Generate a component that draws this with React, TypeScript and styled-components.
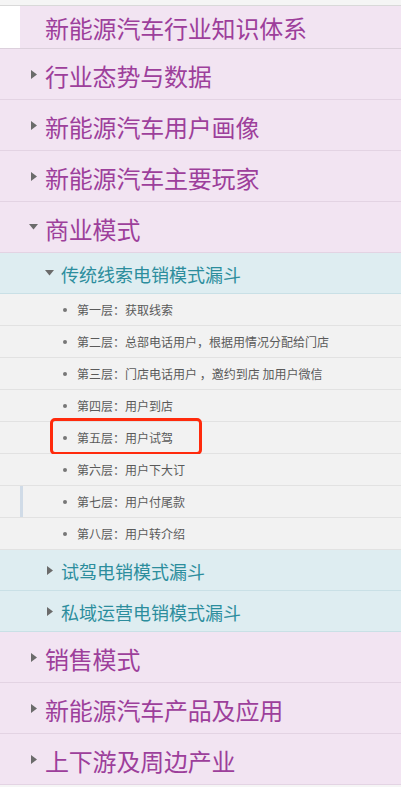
import { createGlobalStyle } from 'styled-components'
import styled from 'styled-components'
import type { FC } from 'react'

const GlobalStyle = createGlobalStyle`
  html, body {
    margin: 0;
    padding: 0;
    background: #f5f5f5;
  }
  body {
    font-family: "Noto Sans CJK SC", "Noto Sans", sans-serif;
  }
`

type Leaf = { label: string; marked?: boolean; highlighted?: boolean }

const topics = ['行业态势与数据', '新能源汽车用户画像', '新能源汽车主要玩家']
const bottomTopics = ['销售模式', '新能源汽车产品及应用', '上下游及周边产业']

const leaves: Leaf[] = [
  { label: '第一层：获取线索' },
  { label: '第二层：总部电话用户，根据用情况分配给门店' },
  { label: '第三层：门店电话用户 ，邀约到店 加用户微信' },
  { label: '第四层：用户到店' },
  { label: '第五层：用户试驾', highlighted: true },
  { label: '第六层：用户下大订' },
  { label: '第七层：用户付尾款', marked: true },
  { label: '第八层：用户转介绍' }
]

const Arrow: FC<{ open?: boolean }> = ({ open }) => (
  <ArrowBox>
    {open ? (
      <svg width="9" height="6" viewBox="0 0 9 6">
        <path d="M0 0 L9 0 L4.5 5.5 Z" fill="#6b6b6b" />
      </svg>
    ) : (
      <svg width="6" height="9" viewBox="0 0 6 9">
        <path d="M0 0 L6 4.5 L0 9 Z" fill="#6b6b6b" />
      </svg>
    )}
  </ArrowBox>
)

const App: FC = () => {
  return (
    <>
      <GlobalStyle />
      <Page>
        <TopStrip />
        <Tree>
          <HeaderRow>
            <HeaderGap />
            <HeaderTitle>新能源汽车行业知识体系</HeaderTitle>
          </HeaderRow>

          {topics.map((t) => (
            <TopicRow key={t}>
              <Arrow />
              <TopicText>{t}</TopicText>
            </TopicRow>
          ))}

          <TopicRow>
            <Arrow open />
            <TopicText>商业模式</TopicText>
          </TopicRow>

          <SubRow>
            <Arrow open />
            <SubText>传统线索电销模式漏斗</SubText>
          </SubRow>

          {leaves.map((l) => (
            <LeafRow key={l.label} $marked={l.marked}>
              <Bullet />
              <LeafText>{l.label}</LeafText>
              {l.highlighted && <Highlight />}
            </LeafRow>
          ))}

          <SubRow>
            <Arrow />
            <SubText>试驾电销模式漏斗</SubText>
          </SubRow>
          <SubRow>
            <Arrow />
            <SubText>私域运营电销模式漏斗</SubText>
          </SubRow>

          {bottomTopics.map((t) => (
            <TopicRow key={t}>
              <Arrow />
              <TopicText>{t}</TopicText>
            </TopicRow>
          ))}
        </Tree>
      </Page>
    </>
  )
}

// Styled Components
const Page = styled.div`
  width: 401px;
  min-height: 787px;
  background: #f5f5f5;
`

const TopStrip = styled.div`
  height: 5px;
  border-bottom: 1px solid #d9d9d9;
`

const Tree = styled.div`
  display: flex;
  flex-direction: column;
`

const HeaderRow = styled.div`
  display: flex;
  height: 42px;
  border-bottom: 1px solid #dcd0dc;
  background: #f2e4f2;
`

const HeaderGap = styled.div`
  width: 20px;
  background: #ffffff;
`

const HeaderTitle = styled.div`
  display: flex;
  align-items: center;
  padding-left: 25px;
  font-size: 24px;
  color: #9d3f9b;
  letter-spacing: -0.2px;
`

const TopicRow = styled.div`
  display: flex;
  align-items: center;
  height: 50px;
  padding-left: 29px;
  background: #f2e4f2;
  border-bottom: 1px solid #e3d3e3;
`

const ArrowBox = styled.span`
  display: flex;
  align-items: center;
  justify-content: center;
  width: 9px;
  margin-right: 7px;
`

const TopicText = styled.span`
  font-size: 24px;
  color: #9d3f9b;
  letter-spacing: -0.2px;
  padding-top: 2px;
`

const SubRow = styled.div`
  display: flex;
  align-items: center;
  height: 40px;
  padding-left: 45px;
  background: #deedf1;
  border-bottom: 1px solid #c9e0e6;
`

const SubText = styled.span`
  font-size: 18px;
  color: #2c8d9d;
  padding-top: 1px;
`

const LeafRow = styled.div<{ $marked?: boolean }>`
  position: relative;
  display: flex;
  align-items: center;
  height: 31px;
  padding-left: 63px;
  background: #f2f2f2;
  border-bottom: 1px solid #e2e2e2;

  &::before {
    content: '';
    display: ${(p) => (p.$marked ? 'block' : 'none')};
    position: absolute;
    left: 20px;
    top: 0;
    bottom: 0;
    width: 3px;
    background: #d0dbe7;
  }
`

const Bullet = styled.span`
  width: 4px;
  height: 4px;
  border-radius: 50%;
  background: #777777;
  margin-right: 10px;
`

const LeafText = styled.span`
  font-size: 12px;
  color: #5a5a5a;
`

const Highlight = styled.div`
  position: absolute;
  left: 50px;
  top: -4px;
  width: 146px;
  height: 31px;
  border: 3px solid #ff2a0c;
  border-radius: 5px;
`

export default App
